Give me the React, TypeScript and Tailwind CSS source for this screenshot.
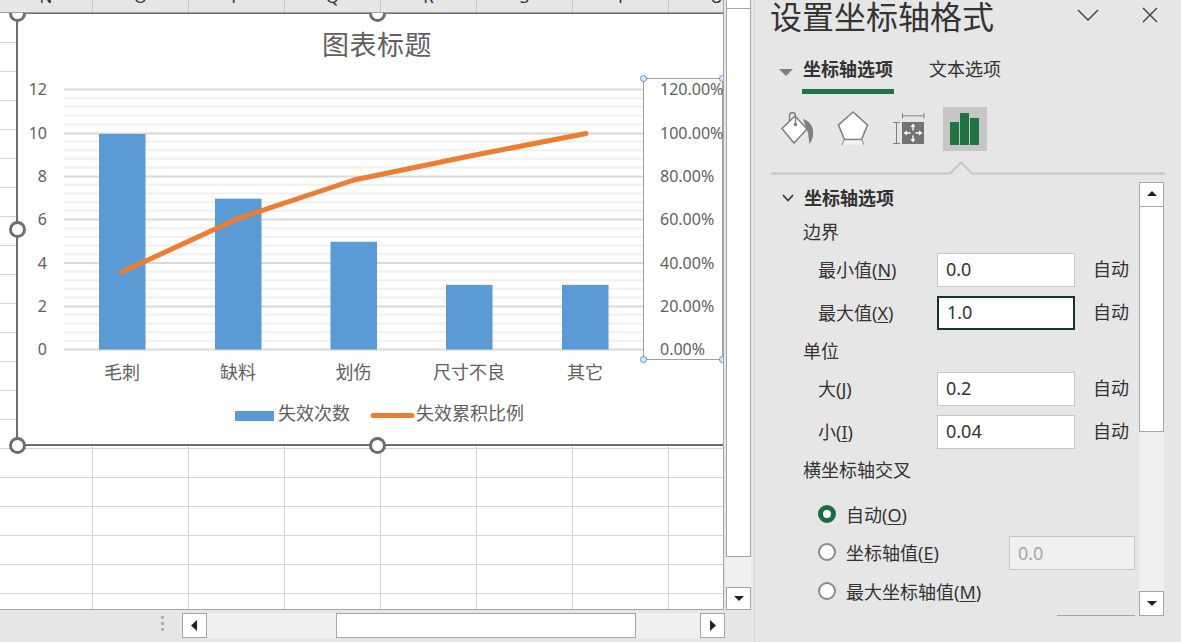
const columns = ['N', 'O', 'P', 'Q', 'R', 'S', 'T', 'U'];
const categories = ['毛刺', '缺料', '划伤', '尺寸不良', '其它'];
const counts = [10, 7, 5, 3, 3];
const barLefts = [99, 215, 330.5, 446, 562];
const leftTicks = [12, 10, 8, 6, 4, 2, 0];
const rightTicks = ['120.00%', '100.00%', '80.00%', '60.00%', '40.00%', '20.00%', '0.00%'];
const tickYs = [89.5, 133.5, 176.5, 219.5, 263, 306.5, 349.5];
const linePoints = '122,272 238,218.5 354,180 470,156 586,133.5';
const labelFill = '#606060';

function ChartDrawing() {
  const minor: number[] = [];
  for (let i = 0; i < 30; i++) if (i % 5 !== 0) minor.push(89.5 + i * 8.667);

  return (
    <svg width="724" height="597" viewBox="0 13 724 597" className="absolute left-0 top-0">
      {minor.map((y) => (
        <line key={y} x1="64" x2="643" y1={y} y2={y} stroke="#f0f0f0" strokeWidth="2" />
      ))}
      {tickYs.map((y) => (
        <line key={y} x1="64" x2="643" y1={y} y2={y} stroke="#d9d9d9" strokeWidth="2" />
      ))}
      {counts.map((c, i) => (
        <rect key={i} x={barLefts[i]} y={349.5 - c * 21.55} width="46.5" height={c * 21.55} fill="#5b9bd5" />
      ))}
      <polyline points={linePoints} fill="none" stroke="#ed7d31" strokeWidth="5" strokeLinecap="round" strokeLinejoin="round" />

      <text x="377" y="55" textAnchor="middle" fontSize="27" letterSpacing="0.5" fill={labelFill}>图表标题</text>
      {leftTicks.map((t, i) => (
        <text key={t} x="47" y={tickYs[i] + 5.5} textAnchor="end" fontSize="16" fill={labelFill}>{t}</text>
      ))}
      {categories.map((c, i) => (
        <text key={c} x={barLefts[i] + 23} y="379" textAnchor="middle" fontSize="18" fill={labelFill}>{c}</text>
      ))}

      <rect x="235" y="411" width="39" height="10" fill="#5b9bd5" />
      <text x="278" y="420" fontSize="18" fill={labelFill}>失效次数</text>
      <line x1="373" x2="412" y1="415.5" y2="415.5" stroke="#ed7d31" strokeWidth="5" strokeLinecap="round" />
      <text x="416" y="420" fontSize="18" fill={labelFill}>失效累积比例</text>

      <rect x="643.5" y="78.5" width="79" height="281" fill="#fff" stroke="#a0a0a0" />
      {rightTicks.map((t, i) => (
        <text key={t} x="660" y={tickYs[i] + 5.5} fontSize="16" fill={labelFill}>{t}</text>
      ))}
      {[[643.5, 78.5], [722.5, 78.5], [643.5, 359.5], [722.5, 359.5]].map(([cx, cy]) => (
        <circle key={`${cx}-${cy}`} cx={cx} cy={cy} r="3" fill="#d9ecfb" stroke="#4f94d0" strokeWidth="1" />
      ))}
    </svg>
  );
}

function SheetArea() {
  return (
    <div className="flex h-[610px] w-[724px] flex-col border-b border-r border-[#a6a6a6]">
      <div className="flex h-[13px] shrink-0 overflow-hidden border-b border-[#a0a0a0] bg-[#e6e6e6]">
        {columns.map((c, i) => (
          <div
            key={c}
            className={`flex h-[12px] shrink-0 justify-center border-r border-[#c8c8c8] text-[17px] leading-[17px] text-[#333] ${i === 0 ? 'w-[93px]' : 'w-[96px]'}`}
          >
            <span className="-mt-[12px]">{c}</span>
          </div>
        ))}
      </div>
      <div className="relative flex-1 overflow-hidden bg-white pt-px">
        {Array.from({ length: 21 }).map((_, r) => (
          <div key={r} className="flex h-[29px]">
            {columns.map((c, i) => (
              <div
                key={c}
                className={`shrink-0 border-b border-r border-[#d4d4d4] ${i === 0 ? 'w-[93px]' : 'w-[96px]'}`}
              />
            ))}
          </div>
        ))}

        <div className="absolute left-[16px] top-[-1px] h-[434px] w-[708px] border-2 border-r border-[#6e6e6e] border-r-[#a6a6a6] bg-white" />
        <ChartDrawing />

        <div className="absolute left-[9px] top-[-8px] h-[17px] w-[17px] rounded-full border-[3px] border-[#6e6e6e] bg-white" />
        <div className="absolute left-[369px] top-[-8px] h-[17px] w-[17px] rounded-full border-[3px] border-[#6e6e6e] bg-white" />
        <div className="absolute left-[9px] top-[208px] h-[17px] w-[17px] rounded-full border-[3px] border-[#6e6e6e] bg-white" />
        <div className="absolute left-[9px] top-[424px] h-[17px] w-[17px] rounded-full border-[3px] border-[#6e6e6e] bg-white" />
        <div className="absolute left-[369px] top-[424px] h-[17px] w-[17px] rounded-full border-[3px] border-[#6e6e6e] bg-white" />
      </div>
    </div>
  );
}

function ScrollButton({ dir, className = '' }: { dir: 'up' | 'down' | 'left' | 'right'; className?: string }) {
  const points = {
    up: '3,9 13,9 8,4',
    down: '3,5 13,5 8,10',
    left: '10,2 10,13 4,7.5',
    right: '5,2 5,13 11,7.5',
  }[dir];
  return (
    <div className={`flex shrink-0 items-center justify-center border border-[#a6a6a6] bg-white ${className}`}>
      <svg width="16" height="15" viewBox="0 0 16 15">
        <polygon points={points} fill="#222" />
      </svg>
    </div>
  );
}

function BottomBar() {
  return (
    <div className="flex h-[32px] items-start pl-[161px] pt-[3px]">
      <div className="flex w-[4px] flex-col gap-[3px] pt-[3px]">
        <div className="h-[3px] w-[3px] bg-[#b0b0b0]" />
        <div className="h-[3px] w-[3px] bg-[#b0b0b0]" />
        <div className="h-[3px] w-[3px] bg-[#b0b0b0]" />
      </div>
      <ScrollButton dir="left" className="ml-[17px] h-[25px] w-[25px]" />
      <div className="h-[25px] w-[129px] bg-[#f0f0f0]" />
      <div className="h-[25px] w-[300px] border border-[#a6a6a6] bg-white" />
      <div className="h-[25px] w-[64px] bg-[#f0f0f0]" />
      <ScrollButton dir="right" className="h-[25px] w-[25px]" />
    </div>
  );
}

function BucketIcon() {
  return (
    <svg width="36" height="36" viewBox="779 111 36 36">
      <path d="M803 119 Q812 122 813 130 Q814 138 809.5 144 L808 133 Z" fill="#7f7f7f" />
      <path d="M782 128.5 L795 116 L807 129 L794 143 Z" fill="#fff" stroke="#7f7f7f" strokeWidth="1.5" />
      <path d="M789.5 122 V115 Q790 112.5 793 112.5 Q795.5 113 795.5 116 V124" fill="none" stroke="#7f7f7f" strokeWidth="1.3" />
      <circle cx="795.5" cy="124.5" r="1.8" fill="#7f7f7f" />
    </svg>
  );
}

function PentagonIcon() {
  return (
    <svg width="34" height="42" viewBox="836 108 34 42">
      <defs>
        <linearGradient id="pentShade" x1="0" y1="0" x2="0" y2="1">
          <stop offset="0" stopColor="#ffffff" />
          <stop offset="1" stopColor="#ffffff" stopOpacity="0" />
        </linearGradient>
      </defs>
      <path d="M844 140 L841.5 146 H864.5 L862 140 Z" fill="url(#pentShade)" />
      <path d="M844 140 L842 145 M862 140 L864 145" stroke="#9a9a9a" strokeWidth="1.2" />
      <polygon points="853,112 867.5,125 861.5,139.5 844.5,139.5 838.5,125" fill="#fff" stroke="#7f7f7f" strokeWidth="1.6" />
    </svg>
  );
}

function SizeIcon() {
  return (
    <svg width="34" height="34" viewBox="892 112 34 34">
      <path d="M902.5 113 V118.5 M924 113 V118.5 M902.5 115.8 H924" stroke="#7f7f7f" strokeWidth="1" fill="none" />
      <path d="M893 122.5 H900 M893 143.5 H900 M896.5 122.5 V143.5" stroke="#7f7f7f" strokeWidth="1" fill="none" />
      <rect x="902" y="122" width="22" height="22" fill="#737373" />
      <path d="M913 126 V130.5 M913 135.5 V140 M906 133 H910.5 M915.5 133 H920" stroke="#fff" strokeWidth="1.4" fill="none" />
      <path d="M913 123.5 L915.5 127 H910.5 Z M913 142.5 L915.5 139 H910.5 Z M903.5 133 L907 130.5 V135.5 Z M922.5 133 L919 130.5 V135.5 Z" fill="#fff" />
    </svg>
  );
}

function BarsIcon() {
  return (
    <div className="flex h-[44px] w-[44px] items-center justify-center bg-[#c6c6c6]">
      <svg width="30" height="32" viewBox="0 0 30 32">
        <rect x="0" y="9" width="9" height="23" fill="#217346" />
        <rect x="10" y="0" width="9" height="32" fill="#217346" />
        <rect x="20" y="5" width="9" height="27" fill="#217346" />
      </svg>
    </div>
  );
}

function FieldRow({ label, hotkey, value, active, className = '' }: {
  label: string;
  hotkey: string;
  value: string;
  active?: boolean;
  className?: string;
}) {
  return (
    <div className={`flex h-[34px] items-center pl-[63px] ${className}`}>
      <div className="w-[119px]">
        {label}(<span className="underline underline-offset-2">{hotkey}</span>)
      </div>
      <div
        className={`flex h-[34px] w-[138px] items-center bg-white pb-[2px] pl-[8px] ${active ? 'border-2 border-[#17352a]' : 'border border-[#c6c6c6]'}`}
      >
        {value}
      </div>
      <div className="ml-[18px] pb-[2px]">自动</div>
    </div>
  );
}

function RadioRow({ label, hotkey, checked, className = '', children }: {
  label: string;
  hotkey: string;
  checked?: boolean;
  className?: string;
  children?: React.ReactNode;
}) {
  return (
    <div className={`flex h-[34px] items-center pl-[63px] ${className}`}>
      <div
        className={`-mt-[2px] h-[18px] w-[18px] shrink-0 rounded-full bg-white ${checked ? 'border-[5px] border-[#1b6b41]' : 'border-2 border-[#8a8a8a]'}`}
      />
      <div className="ml-[10px]">
        {label}(<span className="underline underline-offset-2">{hotkey}</span>)
      </div>
      {children}
    </div>
  );
}

function FormatPanel() {
  return (
    <div className="h-[642px] w-[426px] shrink-0 overflow-hidden text-[18px] text-[#333]">
      <div className="flex h-[56px] items-start pl-[15px]">
        <div className="-mt-[4px] text-[32px] leading-[42px] text-[#333]">设置坐标轴格式</div>
        <svg width="22" height="12" viewBox="0 0 22 12" className="ml-[83px] mt-[9px]">
          <path d="M1 1 L11 11 L21 1" fill="none" stroke="#404040" strokeWidth="1.4" />
        </svg>
        <svg width="16" height="16" viewBox="0 0 16 16" className="ml-[43px] mt-[7px]">
          <path d="M1 1 L15 15 M15 1 L1 15" fill="none" stroke="#404040" strokeWidth="1.4" />
        </svg>
      </div>

      <div className="flex h-[38px] items-start pl-[24px]">
        <svg width="14" height="8" viewBox="0 0 14 8" className="mt-[13px]">
          <polygon points="0,0 14,0 7,7" fill="#7f7f7f" />
        </svg>
        <div className="ml-[9px] flex h-[38px] w-[92px] flex-col border-b-[5px] border-[#217346]">
          <div className="pl-[1px] text-[18px] font-bold leading-[26px]">坐标轴选项</div>
        </div>
        <div className="ml-[35px] leading-[26px]">文本选项</div>
      </div>

      <div className="mt-[13px] flex h-[44px] items-center pl-[24px]">
        <BucketIcon />
        <div className="ml-[21px]"><PentagonIcon /></div>
        <div className="ml-[22px]"><SizeIcon /></div>
        <div className="ml-[17px]"><BarsIcon /></div>
      </div>

      <svg width="426" height="14" viewBox="0 0 426 14" className="mt-[10px] block">
        <path d="M16 12.5 H195 L206 1.5 L217 12.5 H410" fill="none" stroke="#c6c6c6" strokeWidth="2" />
      </svg>

      <div className="mt-[7px] flex h-[434px] overflow-hidden">
        <div className="w-[384px] shrink-0">
          <div className="flex h-[32px] items-center pl-[27px] font-bold">
            <svg width="12" height="8" viewBox="0 0 12 8" className="mr-[10px]">
              <path d="M1 1 L6 6.5 L11 1" fill="none" stroke="#333" strokeWidth="1.6" />
            </svg>
            坐标轴选项
          </div>
          <div className="flex h-[36px] items-center pl-[48px]">边界</div>
          <FieldRow label="最小值" hotkey="N" value="0.0" className="mt-[3px]" />
          <FieldRow label="最大值" hotkey="X" value="1.0" active className="mt-[9px]" />
          <div className="flex h-[42px] items-center pl-[48px]">单位</div>
          <FieldRow label="大" hotkey="J" value="0.2" />
          <FieldRow label="小" hotkey="I" value="0.04" className="mt-[9px]" />
          <div className="mt-[3px] flex h-[36px] items-center pl-[48px]">横坐标轴交叉</div>
          <RadioRow label="自动" hotkey="O" checked className="mt-[10px]" />
          <RadioRow label="坐标轴值" hotkey="E" className="mt-[4px]">
            <div className="ml-auto mr-[4px] flex h-[34px] w-[126px] items-center border border-[#c6c6c6] bg-[#f0f0f0] pl-[8px] text-[#a6a6a6]">
              0.0
            </div>
          </RadioRow>
          <RadioRow label="最大坐标轴值" hotkey="M" className="mt-[5px]" />
          <div className="ml-[302px] mt-[6px] h-px w-[78px] bg-[#a6a6a6]" />
        </div>

        <div className="flex h-[434px] w-[25px] shrink-0 flex-col">
          <ScrollButton dir="up" className="h-[25px] w-[25px]" />
          <div className="h-[225px] border border-t-0 border-[#a6a6a6] bg-white" />
          <div className="h-[159px] bg-[#f0f0f0]" />
          <ScrollButton dir="down" className="h-[25px] w-[25px]" />
        </div>
      </div>
    </div>
  );
}

export default function App() {
  return (
    <div className="flex h-[642px] w-[1181px] overflow-hidden bg-[#e6e6e6] font-['Noto_Sans','Noto_Sans_CJK_SC',sans-serif]">
      <div className="flex w-[755px] shrink-0 flex-col border-r border-[#d2d2d2]">
        <div className="flex h-[610px]">
          <SheetArea />
          <div className="ml-[2px] flex w-[25px] flex-col">
            <div className="h-[9px] border border-t-0 border-[#a6a6a6] bg-white" />
            <div className="h-[548px] border border-t-0 border-[#a6a6a6] bg-white" />
            <div className="h-[30px] bg-[#f0f0f0]" />
            <ScrollButton dir="down" className="h-[23px] w-[25px]" />
          </div>
        </div>
        <BottomBar />
      </div>
      <FormatPanel />
    </div>
  );
}
